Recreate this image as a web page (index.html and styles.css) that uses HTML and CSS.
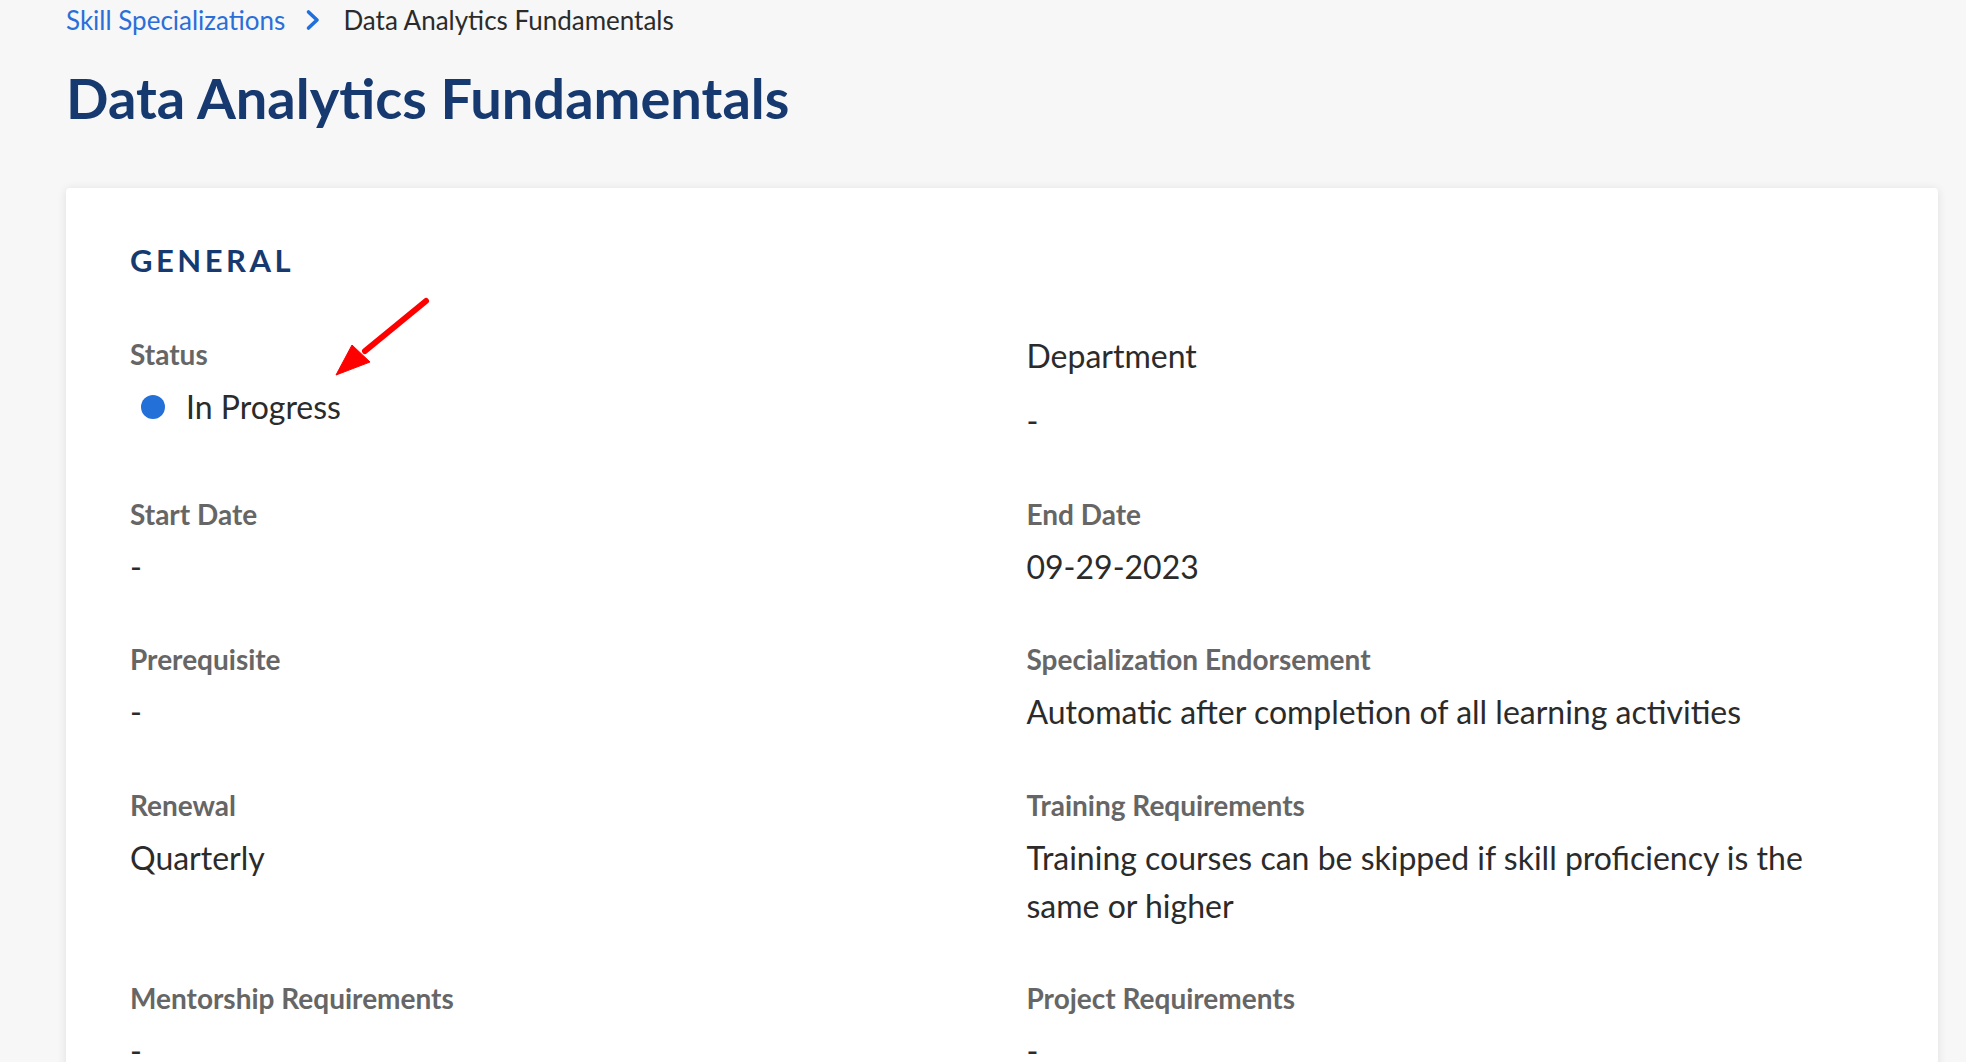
FILE: index.html
```html
<!DOCTYPE html>
<html lang="en">
<head>
<meta charset="utf-8">
<title>Data Analytics Fundamentals</title>
<link rel="stylesheet" href="styles.css">
</head>
<body>
<div class="page">
  <nav class="breadcrumb">
    <a class="crumb-link" href="#">Skill Specializations</a>
    <svg class="chev" width="16" height="22" viewBox="0 0 16 22"><path d="M3.5 3 L12 11 L3.5 19" fill="none" stroke="#1f6fdc" stroke-width="3.6" stroke-linecap="round" stroke-linejoin="round"/></svg>
    <span class="crumb-current">Data Analytics Fundamentals</span>
  </nav>
  <h1 class="title">Data Analytics Fundamentals</h1>
  <section class="card">
    <h2 class="section-title">GENERAL</h2>
    <div class="grid">
      <div class="field">
        <div class="label">Status</div>
        <div class="value status">
          <span class="dot"></span><span>In Progress</span>
          <svg class="arrow" width="110" height="100" viewBox="0 0 110 100"><path d="M97 11 L36 61" stroke="#ff0000" stroke-width="6" stroke-linecap="round" fill="none"/><path d="M7 85 L23 55 L41 72 Z" fill="#ff0000" stroke="#ff0000" stroke-width="1" stroke-linejoin="round"/></svg>
        </div>
      </div>
      <div class="field">
        <div class="label-plain">Department</div>
        <div class="value">-</div>
      </div>
      <div class="field">
        <div class="label">Start Date</div>
        <div class="value">-</div>
      </div>
      <div class="field">
        <div class="label">End Date</div>
        <div class="value">09-29-2023</div>
      </div>
      <div class="field">
        <div class="label">Prerequisite</div>
        <div class="value">-</div>
      </div>
      <div class="field">
        <div class="label">Specialization Endorsement</div>
        <div class="value">Automatic after completion of all learning activities</div>
      </div>
      <div class="field">
        <div class="label">Renewal</div>
        <div class="value">Quarterly</div>
      </div>
      <div class="field">
        <div class="label">Training Requirements</div>
        <div class="value">Training courses can be skipped if skill proficiency is the same or higher</div>
      </div>
      <div class="field">
        <div class="label">Mentorship Requirements</div>
        <div class="value">-</div>
      </div>
      <div class="field">
        <div class="label">Project Requirements</div>
        <div class="value">-</div>
      </div>
    </div>
  </section>
</div>
</body>
</html>
```
FILE: styles.css
```css
html, body {
  margin: 0;
  padding: 0;
  background: #f7f7f7;
  font-family: Lato, "Open Sans", sans-serif;
  overflow: hidden;
}
.page {
  padding: 0 28px 0 66px;
}
.breadcrumb {
  display: flex;
  align-items: center;
  height: 40px;
  font-size: 26px;
}
.crumb-link {
  color: #2a6fd8;
  text-decoration: none;
}
.chev {
  margin: 0 22px 0 20px;
}
.crumb-current {
  color: #2b2b2b;
}
.title {
  margin: 18px 0 0 0;
  font-size: 56px;
  line-height: 80px;
  font-weight: 700;
  color: #163a70;
}
.card {
  margin-top: 50px;
  background: #fff;
  border-radius: 4px;
  box-shadow: 0 1px 10px rgba(0,0,0,0.10);
  padding: 44px 65px 60px 64px;
  min-height: 1000px;
}
.section-title {
  margin: 0 0 50px 0;
  font-size: 31px;
  line-height: 56px;
  letter-spacing: 3.5px;
  font-weight: 700;
  color: #163a70;
}
.grid {
  display: grid;
  grid-template-columns: 1fr 1fr;
  column-gap: 50px;
  row-gap: 52.5px;
}
.field {
  display: flex;
  flex-direction: column;
}
.label {
  font-size: 28px;
  line-height: 32px;
  font-weight: 700;
  color: #666;
  margin-bottom: 13px;
}
.label-plain {
  font-size: 32px;
  line-height: 36px;
  color: #2b2b2b;
  margin-bottom: 23px;
}
.value {
  font-size: 32px;
  line-height: 48px;
  color: #2b2b2b;
}
.status {
  display: flex;
  align-items: center;
  position: relative;
}
.dot {
  width: 24px;
  height: 24px;
  border-radius: 50%;
  background: #2470d9;
  margin: 0 21px 0 11px;
}
.arrow {
  position: absolute;
  left: 199px;
  top: -93px;
}
```
